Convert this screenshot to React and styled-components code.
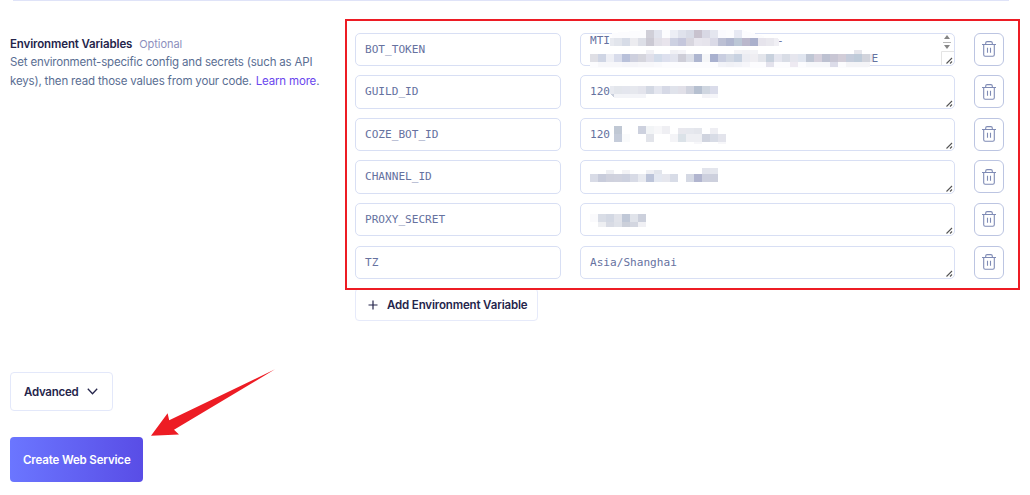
import React from 'react';
import styled, { createGlobalStyle } from 'styled-components';

const Global = createGlobalStyle`
  * { box-sizing: border-box; }
  body { margin: 0; background: #fff; font-family: "Inter", sans-serif; overflow: hidden; }
`;

const Page = styled.main`
  position: relative;
  width: 1030px;
  height: 495px;
  background: #fff;
`;

const Divider = styled.hr`
  margin: 0 21px 0 13px;
  border: 0;
  height: 1px;
  background: #dfe3f8;
`;

const Section = styled.section`
  display: flex;
  padding: 31.8px 0 0 10px;
  height: 371px;
`;

const Intro = styled.div`
  width: 345px;
`;

const Line = styled.div`
  height: 18.4px;
  line-height: 18.4px;
  white-space: nowrap;
`;

const Label = styled.span`
  display: inline-block;
  white-space: nowrap;
  font-size: ${(p) => p.$size || 11.5}px;
  font-weight: ${(p) => p.$weight || 400};
  letter-spacing: ${(p) => p.$track ?? -0.17}px;
  color: ${(p) => p.$color || '#5a6e93'};
  margin-left: ${(p) => p.$left || 0}px;
`;

const Rows = styled.div`
  display: flex;
  flex-direction: column;
`;

const Row = styled.div`
  display: grid;
  grid-template-columns: 205.5px 374.5px 30px;
  column-gap: 19.5px;
  height: 42.55px;
`;

const Field = styled.div`
  position: relative;
  height: 33.3px;
  border: 1px solid #d8dff4;
  border-radius: 5px;
  padding-left: 9px;
  font: 11.1px/32px "DejaVu Sans Mono", monospace;
  color: #66729f;
  white-space: pre;
  overflow: hidden;
`;

const TokenLines = styled.div`
  line-height: 18px;
  margin-top: -2px;
`;

const TokenLine = styled.div`
  padding-left: ${(p) => p.$indent || 0}px;
`;

const Grip = styled.svg`
  position: absolute;
  right: 0;
  bottom: 0;
`;

const Delete = styled.button`
  display: flex;
  align-items: center;
  justify-content: center;
  height: 33px;
  padding: 0;
  border: 1px solid #bcc5e2;
  border-radius: 6px;
  background: #fff;
`;

const AddButton = styled.button`
  display: flex;
  align-items: center;
  width: 183px;
  height: 33px;
  padding: 0 0 0 12px;
  border: 1px solid #e6eafa;
  border-radius: 4px;
  background: #fff;
  font-family: inherit;
`;

const Advanced = styled.button`
  display: flex;
  align-items: center;
  gap: 9px;
  width: 103px;
  height: 39px;
  margin-left: 10px;
  padding: 0 0 0 13px;
  border: 1px solid #e3e8fa;
  border-radius: 4px;
  background: #fff;
  font-family: inherit;
`;

const Create = styled.button`
  display: flex;
  align-items: center;
  width: 133px;
  height: 45px;
  margin: 26px 0 0 10px;
  padding: 0 0 0 13px;
  border: 0;
  border-radius: 4px;
  background: linear-gradient(90deg, #6b76ff, #594de6);
  font-family: inherit;
`;

const Outline = styled.div`
  position: absolute;
  left: 345px;
  top: 19px;
  width: 675px;
  height: 271px;
  border: 2px solid #ed1c24;
`;

const Overlay = styled.svg`
  position: absolute;
  left: 0;
  top: 0;
  pointer-events: none;
`;

const Trash = () => (
  <svg width="16" height="18" viewBox="0 0 16 18" fill="none" stroke="#7f8bb5" strokeWidth="1.1">
    <path d="M1 4.5h14M4.7 4.3V3c0-.9.6-1.4 1.4-1.4h3.8c.8 0 1.4.5 1.4 1.4v1.3M2.7 4.7v10.1c0 .9.6 1.5 1.5 1.5h7.6c.9 0 1.5-.6 1.5-1.5V4.7M6.5 7.8v5M9.5 7.8v5" />
  </svg>
);

const ResizeGrip = () => (
  <Grip width="8" height="8" viewBox="0 0 8 8" stroke="#555" strokeWidth="1.1">
    <path d="M.5 6.5 6 1M4 6.5 6 4.5" />
  </Grip>
);

const Scroller = () => (
  <Grip width="13" height="32" viewBox="0 0 13 32">
    <path d="M.5 18.5v14M.5 18.5H13" stroke="#e4e4e4" fill="none" />
    <path d="M3 6h6L6 2zM3 12h6l-3 4z" fill="#858585" />
    <path d="M2 9.5h8" stroke="#b5b5b5" />
  </Grip>
);

// Redaction strips: [x, y, height, one colour per 8px cell ('' leaves a cell empty)]
const strips = [
  [646, 30, 8, 'd0cfd8 e2e4ee  eceef5 dfe2ec d8dbe6 c8c2ce d8d8e4 e4e6ef fafafe  e7e9f3'],
  [614, 38, 8, 'e2e5ec d7dce7 ececf0 dddfe7 cbc9d3 e2e0e8 e8e4ec cdd1e2 c5c7dc d8d6df e8e6ee e6e4ec dadae7 bcc0d4 b0b6cf bcc7d6 bbb8cc aab0cc e6e4ec e9e8ee'],
  [646, 50, 4, 'f1f1f5   f1f1f5 f4f4f8       f3f3f6 f1f1f5 f3f3f6             e6e6ec'],
  [590, 54, 8, 'dfdfe5 cfd5e4 eeeff5 d8dceb b9c1da ced0de d5d5dd e0e0ea d3dcea dde0ee e2e4ee ceced8 dcdfe8 aeb6d0 f5f6f8 a9b1cf c9cee0 d3d9e4 c8d2e1 ebecf2 efeef2 e3e5eb c8d1dd e5e6ef d9dde6 e6e6ee e0e5ef bfc6d4 d5d0dc bdc1d1 c8c6d4 d2cdd8 c5ccdb bfcbd9 d2d4dc'],
  [598, 62, 5, 'f7f7fa f7f7fa f7f7fa f5f5f9 f5f5f9 f7f7fa f7f7fa f9f9fc        f2f3f8 f0f1f6 f2f3f8 f6f6fa   e3e2ec   eeeaf2  f6f7fa f6f7fa f6f7fa dcdce9  f4f4f7 f4f4f7 f4f4f7'],
  [614, 86, 8, 'e3e6ec e4e6ee e6e8ee e3e4ec d3d8e3 e4e6ef d6d9e6 e0e3eb e1e0e8 d0d3de b6c0d0 cfd6e0 dadcea'],
  [614, 94, 4, 'f3f4f8 f3f4f8 f3f4f8 f3f4f8        f3f3f7 f5f5f9'],
  [614, 126, 8, 'c0c8d4   cdd1de f2f4f6 f7f7f9 efeff3'],
  [678, 128, 6, 'e8e8ee e6e8ee e4e6ec  eeeef3'],
  [614, 134, 8, 'c5ccda fafbfc   e2e4ea   f4f4f7 dbe2e8 eeeff3 eeeff3 d0d4df d8dce6 e3e4ec'],
  [694, 142, 2, 'f7f7fa   f7f7fa'],
  [606, 170, 4, 'eeeff3  f3f3f6   eff0f4 e2e5ec'],
  [702, 168, 6, 'e2e4ec e4e6ed'],
  [590, 174, 8, 'd8dbe6 c8ccdb cfd1dd d0d2de cdd1df d8dbe6 e8eaf0 bcc4d9 e4e8f1 e6e7ee d8dce7  d5d9e4 b1b5cf cdd0de cdd0dd'],
  [590, 214, 8, 'fafafc d9dde6 d3d8e3 e1e3ea c0c8d7 e0e3ea ccd0dc'],
  [598, 222, 5, 'eeeff2 d8dbe4 dfe2e9 ccd0da d3d6e0 f0f0f4'],
];

const Redactions = () => (
  <g shapeRendering="crispEdges">
    <path d="M612 33 646 30H742L764 36V38H612zM590 62H868V68H590z" fill="#fcfcfe" />
    <path d="M610 38h4v8h-4zM610 86h4v8h-4zM870 54h2v8h-2z" fill="#e8eaf0" />
    <path d="M610 94h4l0 4z" fill="#c8cedb" />
    {strips.map(([x, y, h, cells]) =>
      cells.split(' ').map((c, i) => c && (
        <rect key={`${x}-${y}-${i}`} x={x + i * 8} y={y} width="8" height={h} fill={`#${c}`} />
      ))
    )}
    <path d="M774 38h4v-0l1 2v6h-5z" fill="#f0eff4" />
  </g>
);

const variables = [
  ['BOT_TOKEN', null],
  ['GUILD_ID', '120'],
  ['COZE_BOT_ID', '120'],
  ['CHANNEL_ID', ''],
  ['PROXY_SECRET', ''],
  ['TZ', 'Asia/Shanghai'],
];

export default function App() {
  return (
    <Page>
      <Global />
      <Divider />
      <Section>
        <Intro>
          <Line>
            <Label $weight={600} $track={-0.13} $color="#25254b">Environment Variables</Label>
            <Label $size={11} $track={-0.05} $left={7} $color="#8d8fbd">Optional</Label>
          </Line>
          <Line><Label>Set environment-specific config and secrets (such as API</Label></Line>
          <Line>
            <Label>keys), then read those values from your code.</Label>
            <Label $left={4} $color="#6a46ee">Learn more</Label>
            <Label>.</Label>
          </Line>
        </Intro>
        <Rows>
          {variables.map(([name, value]) => (
            <Row key={name}>
              <Field>{name}</Field>
              <Field>
                {value === null ? (
                  <>
                    <TokenLines>
                      <TokenLine>{'MTI                         -'}</TokenLine>
                      <TokenLine $indent={281.5}>E</TokenLine>
                    </TokenLines>
                    <Scroller />
                  </>
                ) : value}
                <ResizeGrip />
              </Field>
              <Delete><Trash /></Delete>
            </Row>
          ))}
          <AddButton>
            <svg width="10" height="10" stroke="#25254b" strokeWidth="1.2"><path d="M5 .5v9M.5 5h9" /></svg>
            <Label $weight={600} $track={-0.15} $left={9} $color="#25254b">Add Environment Variable</Label>
          </AddButton>
        </Rows>
      </Section>
      <Advanced>
        <Label $weight={600} $track={-0.25} $color="#25254b">Advanced</Label>
        <svg width="11" height="7" fill="none" stroke="#25254b" strokeWidth="1.3"><path d="M.8.8 5.5 5.8 10.2.8" /></svg>
      </Advanced>
      <Create><Label $weight={600} $track={-0.15} $color="#fff">Create Web Service</Label></Create>
      <Overlay width="1030" height="495">
        <Redactions />
        <path d="M275 369.3 174 429.8l5 4.7-28 1.3 16.6-22.5 1.6 7z" fill="#ed1c24" />
      </Overlay>
      <Outline />
    </Page>
  );
}
